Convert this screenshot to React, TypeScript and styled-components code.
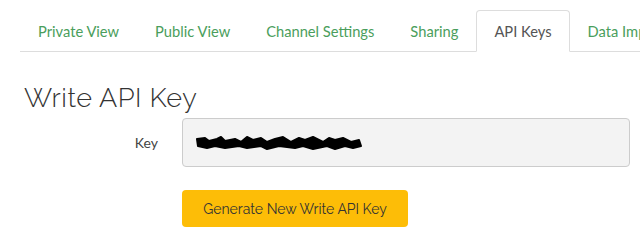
import styled, { createGlobalStyle } from "styled-components";

const Global = createGlobalStyle`
  body {
    margin: 0;
    background: #fff;
    font-family: "Lato", "Open Sans", sans-serif;
  }
`;

const tabs = [
  "Private View",
  "Public View",
  "Channel Settings",
  "Sharing",
  "API Keys",
  "Data Import / Export",
];

const App = () => {
  return (
    <Wrapper>
      <Global />
      <TabBar>
        {tabs.map((t) => (
          <Tab key={t} active={t === "API Keys"}>
            {t}
          </Tab>
        ))}
      </TabBar>
      <Title>Write API Key</Title>
      <FormRow>
        <Label>Key</Label>
        <KeyBox>
          <svg width="170" height="18" viewBox="0 0 170 18">
            <path
              d="M2 5 L10 4 L14 7 L22 5 L26 3 L30 7 L40 5 L46 8 L52 3 L58 6 L66 4 L72 8 L80 5 L88 3 L96 8 L104 4 L110 6 L118 3 L128 8 L134 4 L140 6 L148 4 L156 8 L164 6 L166 12 L158 14 L150 12 L140 15 L132 12 L118 15 L108 12 L100 14 L84 12 L72 15 L66 12 L52 14 L44 12 L30 14 L20 12 L12 14 L3 12 Z"
              fill="#000"
              stroke="#000"
              strokeWidth="2"
              strokeLinejoin="round"
            />
          </svg>
        </KeyBox>
      </FormRow>
      <ButtonRow>
        <GenButton>Generate New Write API Key</GenButton>
      </ButtonRow>
    </Wrapper>
  );
};

const Wrapper = styled.div`
  width: 640px;
  height: 244px;
  overflow: hidden;
  padding-top: 10px;
  box-sizing: border-box;
`;

const TabBar = styled.div`
  display: flex;
  margin-left: 20px;
  border-bottom: 1px solid #ddd;
  white-space: nowrap;
`;

const Tab = styled.div<{ active?: boolean }>`
  padding: 0 17px;
  height: 40px;
  line-height: 40px;
  font-size: 14.7px;
  color: ${(p) => (p.active ? "#555" : "#4a9e5c")};
  background: ${(p) => (p.active ? "#fff" : "transparent")};
  border: 1px solid ${(p) => (p.active ? "#ddd" : "transparent")};
  border-bottom-color: ${(p) => (p.active ? "#fff" : "transparent")};
  border-radius: 4px 4px 0 0;
  margin-bottom: -1px;
  flex-shrink: 0;
`;

const Title = styled.h2`
  margin: 30px 0 0 24px;
  font-family: "Raleway", "Lato", sans-serif;
  font-weight: 300;
  font-size: 27px;
  line-height: 32px;
  color: #333;
  letter-spacing: 0.5px;
`;

const FormRow = styled.div`
  display: flex;
  align-items: center;
  margin-top: 4px;
`;

const Label = styled.div`
  width: 158px;
  padding-right: 24px;
  text-align: right;
  font-size: 14px;
  color: #444;
  box-sizing: content-box;
`;

const KeyBox = styled.div`
  width: 448px;
  height: 49px;
  box-sizing: border-box;
  display: flex;
  align-items: center;
  padding-left: 12px;
  background: #f3f3f3;
  border: 1px solid #ccc;
  border-radius: 4px;
`;

const ButtonRow = styled.div`
  margin: 23px 0 0 182px;
`;

const GenButton = styled.button`
  width: 226px;
  height: 37px;
  border: none;
  border-radius: 4px;
  background: #fdbd07;
  color: #333;
  font-family: "Raleway", "Lato", sans-serif;
  font-size: 14px;
`;

export default App;
